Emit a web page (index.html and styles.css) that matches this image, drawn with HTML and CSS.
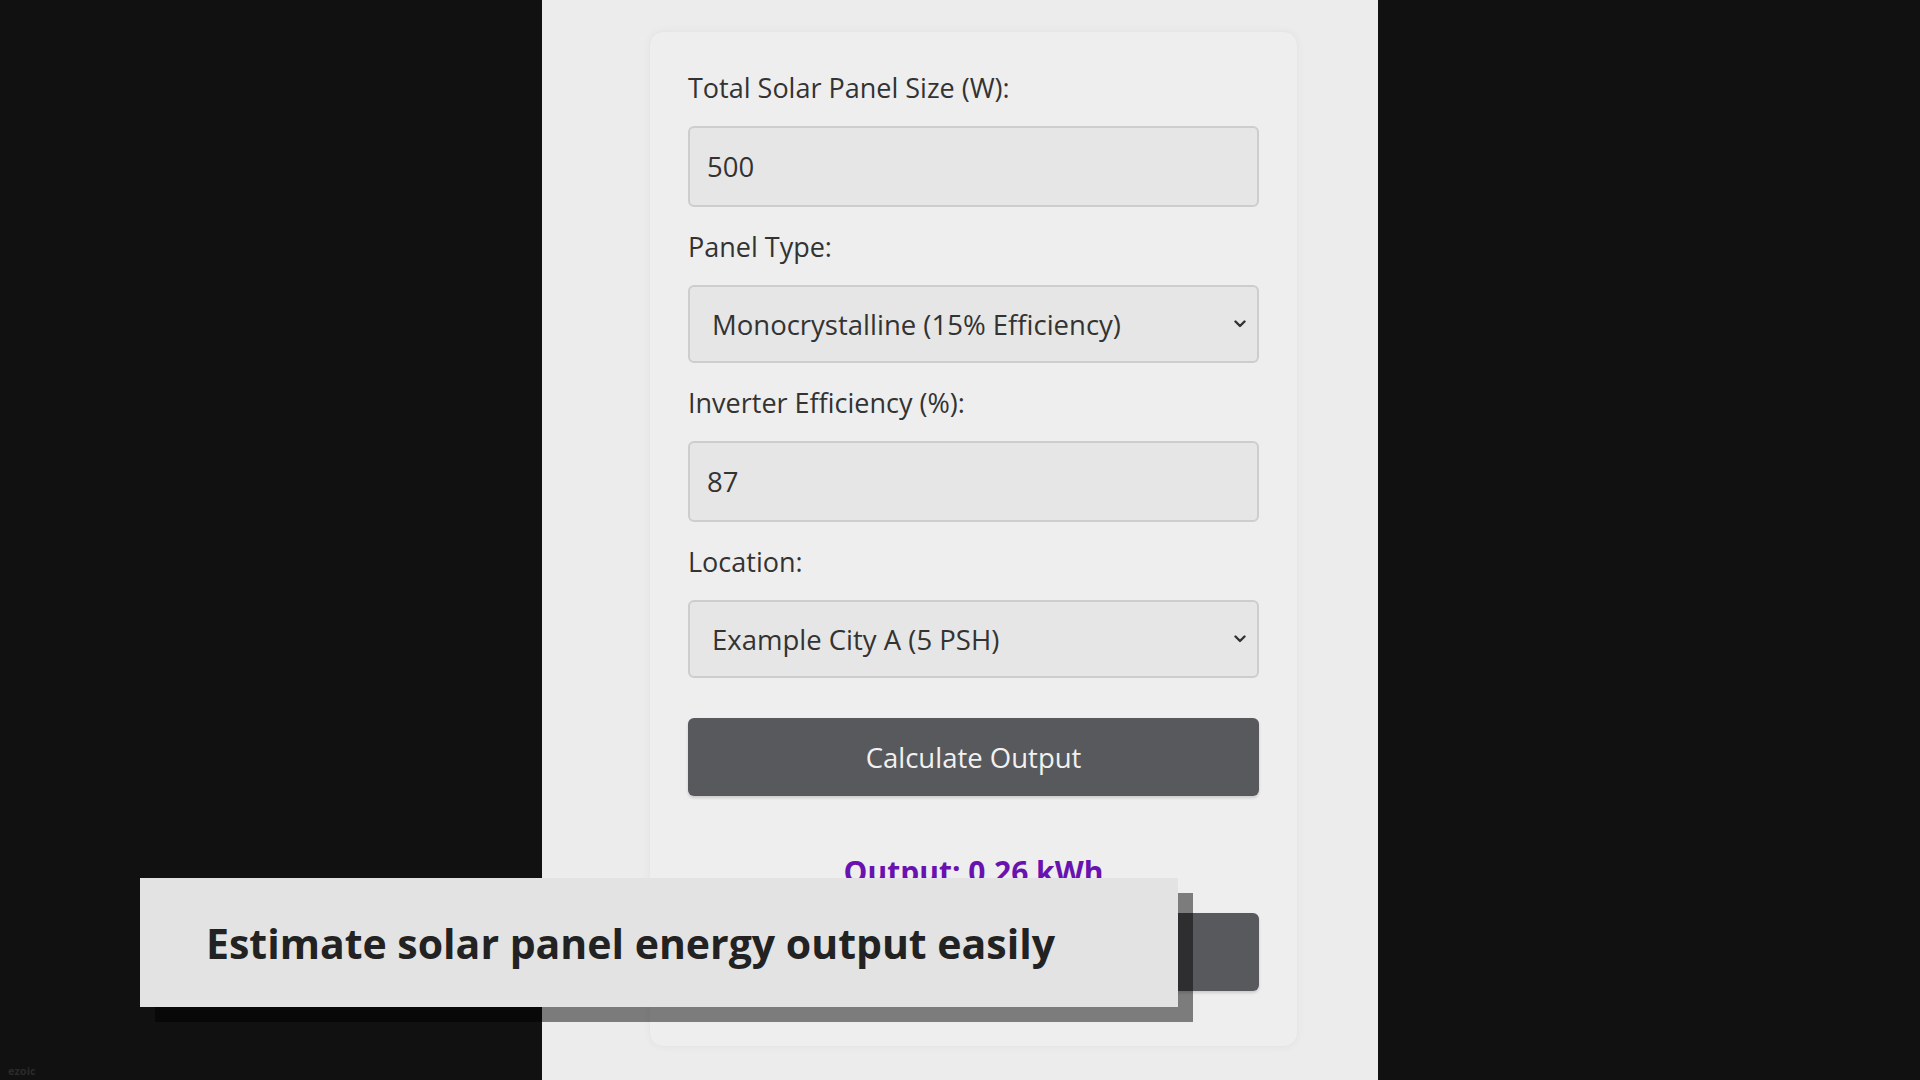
FILE: index.html
```html
<!DOCTYPE html>
<html lang="en">
<head>
    <meta charset="UTF-8">
    <meta name="viewport" content="width=device-width, initial-scale=1.0">
    <title>Solar Panel Output Calculator</title>
    <link rel="stylesheet" href="styles.css">
</head>
<body>

<main class="stage">
    <section class="calculator">
        <div class="field">
            <label for="panel-size">Total Solar Panel Size (W):</label>
            <input id="panel-size" type="number" value="500">
        </div>

        <div class="field">
            <label for="panel-type">Panel Type:</label>
            <div class="select-wrap">
                <select id="panel-type">
                    <option>Monocrystalline (15% Efficiency)</option>
                    <option>Polycrystalline (13% Efficiency)</option>
                    <option>Thin Film (10% Efficiency)</option>
                </select>
                <svg class="chevron" viewBox="0 0 12 8" width="12" height="8">
                    <path d="M1.5 1.5 L6 6 L10.5 1.5" fill="none" stroke="#333" stroke-width="2.4" stroke-linecap="round" stroke-linejoin="round"/>
                </svg>
            </div>
        </div>

        <div class="field">
            <label for="inverter">Inverter Efficiency (%):</label>
            <input id="inverter" type="number" value="87">
        </div>

        <div class="field">
            <label for="location">Location:</label>
            <div class="select-wrap">
                <select id="location">
                    <option>Example City A (5 PSH)</option>
                    <option>Example City B (4 PSH)</option>
                </select>
                <svg class="chevron" viewBox="0 0 12 8" width="12" height="8">
                    <path d="M1.5 1.5 L6 6 L10.5 1.5" fill="none" stroke="#333" stroke-width="2.4" stroke-linecap="round" stroke-linejoin="round"/>
                </svg>
            </div>
        </div>

        <button class="btn btn-calc">Calculate Output</button>

        <div class="result">Output: 0.26 kWh</div>

        <button class="btn btn-reset">Reset</button>
    </section>
</main>

<div class="caption">Estimate solar panel energy output easily</div>

<div class="watermark">ezoic</div>

</body>
</html>
```

FILE: styles.css
```css
body {
    margin: 0;
    padding: 0;
    height: 1080px;
    overflow: hidden;
    background-color: #111111;
    font-family: "Open Sans", "Noto Sans", sans-serif;
    display: flex;
    justify-content: center;
}

.stage {
    width: 836px;
    height: 1080px;
    background-color: #ececec;
    display: flex;
    justify-content: center;
    padding-top: 31px;
    box-sizing: border-box;
}

.calculator {
    width: 649px;
    height: 1016px;
    margin-left: 27px;
    box-sizing: border-box;
    padding: 38px 38px 0 38px;
    background-color: #eeeeee;
    border: 1px solid #e6e6e6;
    border-radius: 14px;
    box-shadow: 0 0 8px rgba(0, 0, 0, 0.04);
}

.field {
    display: flex;
    flex-direction: column;
    margin-bottom: 22px;
}

.field label {
    font-size: 27px;
    line-height: 36px;
    color: #333;
    margin-bottom: 20px;
}

.field input,
.field select {
    width: 100%;
    box-sizing: border-box;
    font-family: "Open Sans", "Noto Sans", sans-serif;
    font-size: 27.5px;
    color: #333;
    background-color: #e6e6e6;
    border: 2px solid #cdcdcd;
    border-radius: 6px;
    outline: none;
}

.field input {
    height: 81px;
    padding: 0 17px;
}

.field input::-webkit-inner-spin-button,
.field input::-webkit-outer-spin-button {
    -webkit-appearance: none;
    margin: 0;
}

.select-wrap {
    position: relative;
}

.field select {
    height: 78px;
    padding: 0 22px;
    appearance: none;
    -webkit-appearance: none;
}

.chevron {
    position: absolute;
    right: 13px;
    top: 35px;
    pointer-events: none;
}

.btn {
    display: block;
    width: 100%;
    height: 78px;
    font-family: "Open Sans", "Noto Sans", sans-serif;
    font-size: 27.5px;
    color: #f1f1f1;
    background-color: #58595d;
    border: none;
    border-radius: 6px;
    box-shadow: 0 2px 3px rgba(0, 0, 0, 0.15);
    cursor: pointer;
}

.btn-calc {
    margin-top: 40px;
}

.result {
    text-align: center;
    font-size: 30px;
    font-weight: 700;
    color: #6a12b0;
    margin: 54px 0 19px 0;
    line-height: 44px;
}

.caption {
    position: absolute;
    left: 140px;
    top: 878px;
    width: 1038px;
    height: 129px;
    box-sizing: border-box;
    padding-left: 66px;
    display: flex;
    align-items: center;
    background-color: #e3e3e3;
    box-shadow: 15px 15px 0 rgba(0, 0, 0, 0.48);
    font-family: "Open Sans", "Noto Sans", sans-serif;
    font-weight: 700;
    font-size: 41px;
    color: #222;
}

.watermark {
    position: absolute;
    left: 8px;
    bottom: 2px;
    font-family: "Open Sans", sans-serif;
    font-size: 11px;
    font-weight: 700;
    color: #2a2a2a;
}
```
